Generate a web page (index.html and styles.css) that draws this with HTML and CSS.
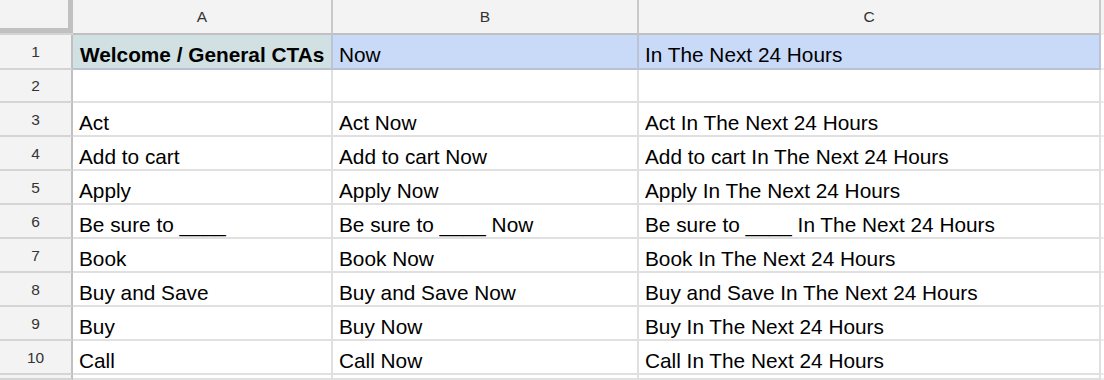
FILE: index.html
```html
<!DOCTYPE html>
<html lang="en">
<head>
  <meta charset="UTF-8" />
  <title>CTA Sheet</title>
  <link rel="stylesheet" href="styles.css">
</head>
<body>

  <div class="sheet">
    <div class="row head-row">
      <div class="corner"><div class="corner-inner"></div></div>
      <div class="col-head">A</div>
      <div class="col-head">B</div>
      <div class="col-head">C</div>
      <div class="filler head-fill"></div>
    </div>

    <div class="row first-row">
      <div class="num">1</div>
      <div class="cell title">Welcome / General CTAs</div>
      <div class="cell blue">Now</div>
      <div class="cell blue">In The Next 24 Hours</div>
      <div class="filler"></div>
    </div>

    <div class="row short-row">
      <div class="num">2</div>
      <div class="cell"></div>
      <div class="cell"></div>
      <div class="cell"></div>
      <div class="filler"></div>
    </div>

    <div id="rows"></div>
  </div>

  <script>
    const ctas = ["Act", "Add to cart", "Apply", "Be sure to ____", "Book", "Buy and Save", "Buy", "Call"];
    const rows = document.getElementById("rows");

    ctas.forEach((text, i) => {
      const row = document.createElement("div");
      row.className = "row";
      row.innerHTML = `
        <div class="num">${i + 3}</div>
        <div class="cell">${text}</div>
        <div class="cell">${text} Now</div>
        <div class="cell">${text} In The Next 24 Hours</div>
        <div class="filler"></div>
      `;
      rows.appendChild(row);
    });

    // partial row cut off by the window edge
    const tail = document.createElement("div");
    tail.className = "row tail-row";
    tail.innerHTML = `<div class="num"></div><div class="cell"></div><div class="cell"></div><div class="cell"></div><div class="filler"></div>`;
    rows.appendChild(tail);
  </script>

</body>
</html>
```

FILE: styles.css
```css
/* General */
* {
  box-sizing: border-box;
}

body {
  margin: 0;
  height: 380px;
  overflow: hidden;
  background: white;
  font-family: "Liberation Sans", Arial, sans-serif;
  color: #000;
}

/* Grid rows */
.row {
  display: grid;
  grid-template-columns: 73px 260px 306px 462px 3px;
  height: 34px;
}

.head-row {
  height: 35px;
}

.first-row {
  height: 35px;
}

.short-row {
  height: 33px;
}

.tail-row {
  height: 5px;
}

/* Header cells */
.corner {
  background: #f3f3f3;
  border-bottom: 2px solid #d4d4d4;
}

.corner-inner {
  height: 33px;
  border-right: 5px solid #c0c0c0;
  border-bottom: 5px solid #c0c0c0;
}

.col-head {
  background: #f3f3f3;
  border-right: 2px solid #c8c8c8;
  border-bottom: 2px solid #c0c0c0;
  display: flex;
  align-items: center;
  justify-content: center;
  font-size: 15.5px;
  color: #333;
}

.head-fill {
  background: #f3f3f3;
  border-bottom: 2px solid #c0c0c0;
}

.num {
  background: #f3f3f3;
  border-right: 2px solid #c0c0c0;
  border-bottom: 2px solid #d4d4d4;
  display: flex;
  align-items: center;
  justify-content: center;
  padding-top: 1px;
  font-size: 15.5px;
  color: #333;
}

/* Body cells */
.cell {
  border-right: 2px solid #e0e0e0;
  border-bottom: 2px solid #e0e0e0;
  display: flex;
  align-items: flex-end;
  padding: 0 5px 1px 6px;
  font-size: 20.8px;
  line-height: 23px;
  white-space: nowrap;
  overflow: hidden;
}

.filler {
  border-bottom: 2px solid #ececec;
}

/* Row 1 highlight */
.first-row .cell {
  border-right-color: #bac4d4;
  border-bottom-color: #b8c2d2;
  padding-bottom: 2px;
}

.title {
  background: #d0e0e3;
  font-weight: bold;
  padding-left: 7px;
}

.blue {
  background: #c9daf8;
}
```
